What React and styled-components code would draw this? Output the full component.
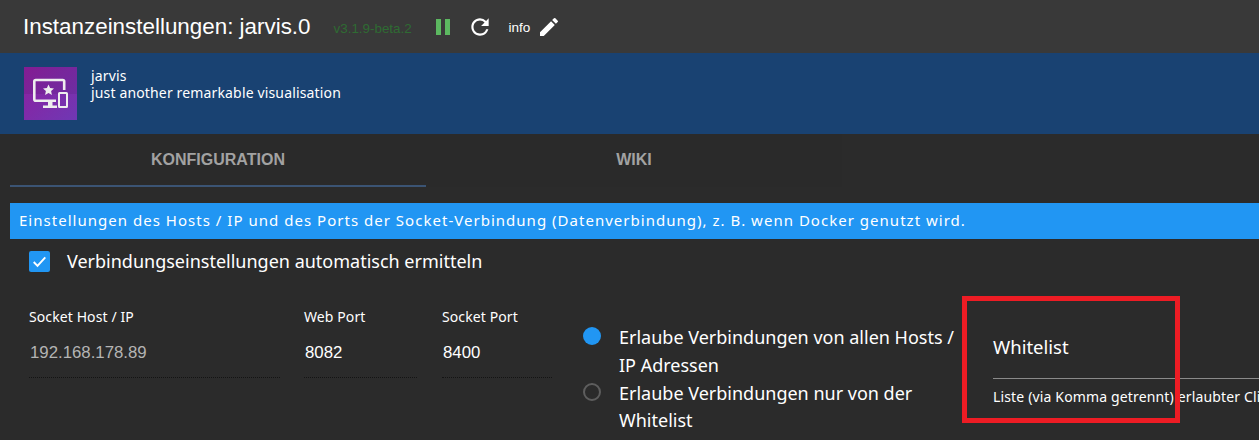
import React from "react";
import styled, { createGlobalStyle } from "styled-components";

const GlobalStyle = createGlobalStyle`
  html, body {
    margin: 0;
    height: 100%;
    overflow: hidden;
    background: #2b2b2b;
  }
`;

const App = () => {
  return (
    <Page>
      <GlobalStyle />
      <Header>
        <Title>Instanzeinstellungen: jarvis.0</Title>
        <Version>v3.1.9-beta.2</Version>
        <Pause viewBox="0 0 16 16">
          <path d="M1 0h5v16H1zM10 0h5v16h-5z" fill="#5cb860" />
        </Pause>
        <HeaderIcon viewBox="0 0 24 24">
          <path
            fill="#fff"
            d="M17.65 6.35A7.96 7.96 0 0 0 12 4C7.58 4 4 7.58 4 12s3.58 8 8 8c3.73 0 6.84-2.55 7.73-6h-2.08A5.99 5.99 0 0 1 12 18c-3.31 0-6-2.69-6-6s2.69-6 6-6c1.66 0 3.14.69 4.22 1.78L13 11h7V4l-2.35 2.35z"
          />
        </HeaderIcon>
        <Info>info</Info>
        <EditIcon viewBox="0 0 24 24">
          <path
            fill="#fff"
            d="M3 17.25V21h3.75L17.81 9.94l-3.75-3.75L3 17.25zM20.71 7.04a1 1 0 0 0 0-1.41l-2.34-2.34a1 1 0 0 0-1.41 0l-1.83 1.83 3.75 3.75 1.83-1.83z"
          />
        </EditIcon>
      </Header>

      <Banner>
        <Logo viewBox="0 0 53 53">
          <defs>
            <linearGradient id="logoBg" x1="0" y1="0" x2="1" y2="1">
              <stop offset="0" stopColor="#8e1f9e" />
              <stop offset="1" stopColor="#6f38b4" />
            </linearGradient>
          </defs>
          <rect width="53" height="53" fill="url(#logoBg)" />
          <rect width="53" height="27" fill="#000" opacity="0.07" />
          <path
            fill="none"
            stroke="#eee"
            strokeWidth="2.6"
            d="M32 33.7H11.8a1.5 1.5 0 0 1-1.5-1.5V14.5a1.5 1.5 0 0 1 1.5-1.5h26.9a1.5 1.5 0 0 1 1.5 1.5V23"
          />
          <path fill="#eee" d="M24 35h4.5v3.5H33V41H19v-2.5h5z" />
          <path fill="#eee" d="M24.5 17.5l1.6 3.6 3.9.4-2.9 2.6.8 3.9-3.4-2-3.4 2 .8-3.9-2.9-2.6 3.9-.4z" />
          <rect x="35" y="26" width="8" height="14" rx="0.5" fill="none" stroke="#eee" strokeWidth="2" />
        </Logo>
        <BannerText>
          <div>jarvis</div>
          <div>just another remarkable visualisation</div>
        </BannerText>
      </Banner>

      <Tabs>
        <Tab $active>KONFIGURATION</Tab>
        <Tab>WIKI</Tab>
      </Tabs>

      <Alert>
        Einstellungen des Hosts / IP und des Ports der Socket-Verbindung (Datenverbindung), z. B. wenn Docker genutzt wird.
      </Alert>

      <CheckRow>
        <CheckBox viewBox="0 0 20 20">
          <rect width="20" height="20" rx="2" fill="#2196f3" />
          <path d="M4.5 10.5l3.6 3.6 7.4-8" fill="none" stroke="#fff" strokeWidth="1.8" />
        </CheckBox>
        <CheckLabel>Verbindungseinstellungen automatisch ermitteln</CheckLabel>
      </CheckRow>

      <Form>
        <Field $width={251} $gap={24}>
          <FieldLabel>Socket Host / IP</FieldLabel>
          <FieldValue $muted>192.168.178.89</FieldValue>
        </Field>
        <Field $width={113} $gap={25}>
          <FieldLabel>Web Port</FieldLabel>
          <FieldValue>8082</FieldValue>
        </Field>
        <Field $width={110} $gap={31}>
          <FieldLabel>Socket Port</FieldLabel>
          <FieldValue>8400</FieldValue>
        </Field>

        <RadioGroup>
          <RadioRow>
            <RadioDot $checked />
            <RadioLabel>Erlaube Verbindungen von allen Hosts / IP Adressen</RadioLabel>
          </RadioRow>
          <RadioRow>
            <RadioDot />
            <RadioLabel>Erlaube Verbindungen nur von der Whitelist</RadioLabel>
          </RadioRow>
        </RadioGroup>

        <Whitelist>
          <WhitelistTitle>Whitelist</WhitelistTitle>
          <WhitelistHelp>Liste (via Komma getrennt) erlaubter Clients</WhitelistHelp>
        </Whitelist>
      </Form>

      <Marker />
    </Page>
  );
};

const bodyFont = `"Noto Sans", "Open Sans", sans-serif`;

const Page = styled.div`
  position: relative;
  width: 1259px;
  height: 440px;
  overflow: hidden;
  background: #2b2b2b;
  color: #fff;
  font-family: ${bodyFont};
`;

const Header = styled.div`
  display: flex;
  align-items: center;
  height: 53px;
  padding-left: 23px;
  background: #393939;
  font-family: "Liberation Sans", Arial, sans-serif;
`;

const Title = styled.div`
  font-size: 22.4px;
  margin-right: 23px;
  white-space: nowrap;
`;

const Version = styled.div`
  font-size: 13.4px;
  color: #2f6b33;
  margin: 3px 23px 0 0;
  width: 78px;
  white-space: nowrap;
`;

const Pause = styled.svg`
  width: 16px;
  height: 16px;
  margin-right: 16px;
`;

const HeaderIcon = styled.svg`
  width: 26px;
  height: 26px;
  margin-right: 16px;
`;

const Info = styled.div`
  font-size: 13.5px;
  margin: 2px 7px 0 0;
`;

const EditIcon = styled.svg`
  width: 24px;
  height: 24px;
`;

const Banner = styled.div`
  display: flex;
  align-items: flex-start;
  height: 81px;
  padding: 14px 0 0 24px;
  box-sizing: border-box;
  background: #194272;
`;

const Logo = styled.svg`
  width: 53px;
  height: 53px;
  margin-right: 14px;
`;

const BannerText = styled.div`
  font-size: 14px;
  line-height: 17px;
  letter-spacing: 0.15px;
  color: #fff;
`;

const Tabs = styled.div`
  display: flex;
  height: 53px;
  margin-left: 10px;
`;

const Tab = styled.div`
  width: 416px;
  height: 53px;
  box-sizing: border-box;
  display: flex;
  align-items: center;
  justify-content: center;
  font-family: "Liberation Sans", Arial, sans-serif;
  font-size: 16px;
  font-weight: 700;
  color: #a2a2a2;
  background: #2a2a2a;
  border-bottom: 2px solid ${(p) => (p.$active ? "#3b5474" : "transparent")};
`;

const Alert = styled.div`
  margin: 16px 0 0 10px;
  height: 36px;
  line-height: 35px;
  padding-left: 9px;
  background: #2196f3;
  font-size: 15px;
  letter-spacing: 1.02px;
  white-space: nowrap;
`;

const CheckRow = styled.div`
  display: flex;
  align-items: center;
  height: 44px;
  padding-left: 29px;
`;

const CheckBox = styled.svg`
  width: 21px;
  height: 21px;
  margin-right: 17px;
`;

const CheckLabel = styled.div`
  font-size: 18px;
`;

const Form = styled.div`
  display: flex;
  align-items: flex-start;
  padding: 25px 0 0 29px;
`;

const Field = styled.div`
  width: ${(p) => p.$width}px;
  margin-right: ${(p) => p.$gap}px;
  flex: none;
`;

const FieldLabel = styled.div`
  font-size: 14px;
  line-height: 17px;
  letter-spacing: 0.1px;
  margin-bottom: 16px;
`;

const FieldValue = styled.div`
  height: 37px;
  padding: 2px 0 0 1px;
  box-sizing: border-box;
  font-family: "Liberation Sans", Arial, sans-serif;
  font-size: 16.8px;
  line-height: 19px;
  color: ${(p) => (p.$muted ? "#b4b4b4" : "#fff")};
  border-bottom: 1px dotted #141414;
`;

const RadioGroup = styled.div`
  width: 410px;
  margin-top: 16px;
  flex: none;
`;

const RadioRow = styled.div`
  display: flex;
  align-items: flex-start;
`;

const RadioDot = styled.div`
  width: 18px;
  height: 18px;
  flex: none;
  box-sizing: border-box;
  margin: 3px 18px 0 0;
  border-radius: 50%;
  background: ${(p) => (p.$checked ? "#2196f3" : "transparent")};
  border: ${(p) => (p.$checked ? "none" : "2px solid #5e5e5e")};
`;

const RadioLabel = styled.div`
  font-size: 18px;
  line-height: 27.8px;
  width: 345px;
`;

const Whitelist = styled.div`
  flex: none;
  width: 300px;
  padding-top: 28px;
  white-space: nowrap;
`;

const WhitelistTitle = styled.div`
  font-size: 18.5px;
  line-height: 22px;
  height: 42px;
  border-bottom: 1px solid #8a8a8a;
`;

const WhitelistHelp = styled.div`
  font-size: 14px;
  line-height: 17px;
  letter-spacing: 0.15px;
  margin-top: 9px;
`;

const Marker = styled.div`
  position: absolute;
  left: 962px;
  top: 296px;
  width: 218px;
  height: 127px;
  box-sizing: border-box;
  border: 5px solid #ed1c24;
`;

export default App;
